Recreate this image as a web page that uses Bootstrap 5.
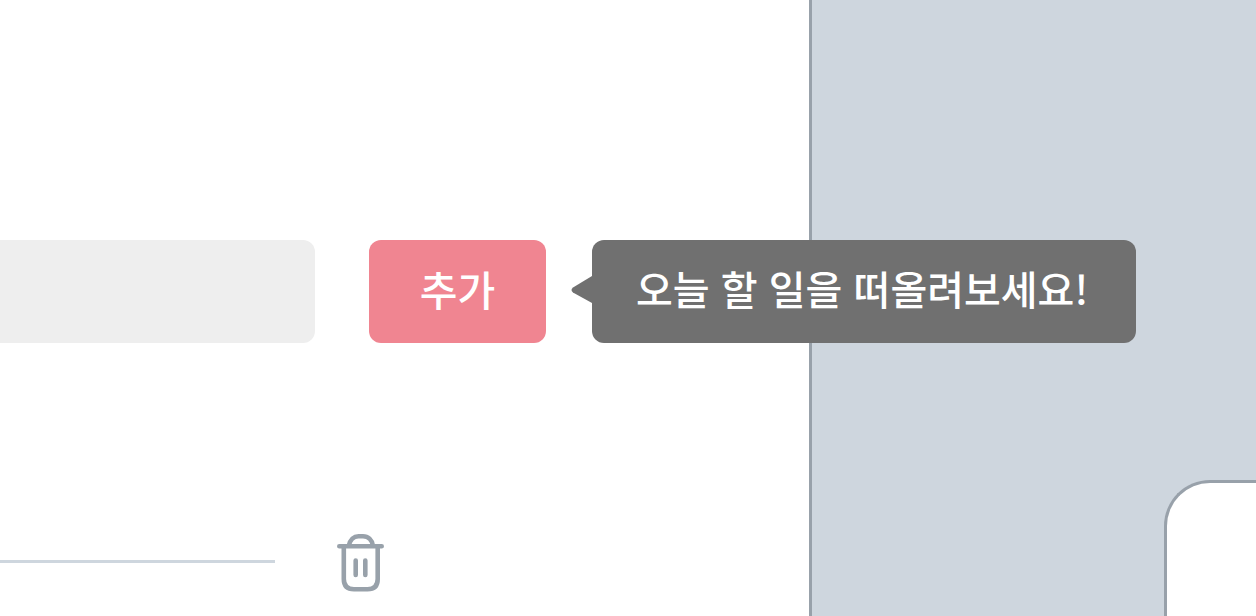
<!DOCTYPE html>
<html lang="ko">
<head>
<meta charset="utf-8">
<meta name="viewport" content="width=device-width, initial-scale=1">
<title>할 일</title>
<link href="https://cdn.jsdelivr.net/npm/bootstrap@5.3.0/dist/css/bootstrap.min.css" rel="stylesheet">
<style>
  body { font-family: "Noto Sans CJK KR", sans-serif; background: #fff; overflow-x: hidden; }
  .todo-main { border-right: 3px solid #98a1aa; padding-top: 240px; min-width: 0; }
  .todo-form { gap: 54px; padding-right: 263px; height: 103px; }
  .todo-input, .todo-input:focus { background: #eee; border: 0; border-radius: 0 12px 12px 0; box-shadow: none; font-size: 41px; }
  .todo-add, .todo-add:hover { width: 177px; padding: 0 0 8px; background: #f08591; color: #fff; border: 0; border-radius: 12px; font-size: 41px; font-weight: 500; line-height: 60px; }
  .todo-hint { left: 100%; margin-left: 46px; padding: 0 48px 8px 44px; background: #707070; color: #fff; border-radius: 12px; font-size: 40px; font-weight: 500; line-height: 60px; z-index: 2; }
  .todo-arrow { right: 100%; width: 21px; height: 32px; }
  .todo-item { margin-top: 191px; gap: 62px; padding-right: 424px; }
  .todo-rule { height: 3px; margin-bottom: 4px; background: #ced6de; }
  .todo-trash { width: 48px; height: 58px; }
  .todo-side { width: 444px; background: #ced6de; padding: 480px 0 0 352px; }
  .todo-panel { background: #fff; border: 3px solid #98a1aa; border-width: 3px 0 0 3px; border-radius: 46px 0 0 0; }
</style>
</head>
<body>
<div class="d-flex min-vh-100">
  <main class="todo-main flex-grow-1">
    <form class="todo-form d-flex">
      <input type="text" class="todo-input form-control flex-grow-1" aria-label="할 일">
      <div class="position-relative d-flex flex-shrink-0">
        <button type="button" class="todo-add btn" aria-describedby="hint">추가</button>
        <div id="hint" role="tooltip" class="todo-hint position-absolute top-0 h-100 d-flex align-items-center text-nowrap">
          <svg class="todo-arrow position-absolute" viewBox="0 0 21 32" aria-hidden="true"><path d="M21 4 2 15.500Q-1 18 2 20.500L21 31Z" fill="#707070"/></svg>
          오늘 할 일을 떠올려보세요!
        </div>
      </div>
    </form>
    <div class="todo-item d-flex align-items-center">
      <div class="todo-rule flex-grow-1"></div>
      <button type="button" class="todo-trash btn p-0 border-0 d-flex flex-shrink-0" aria-label="삭제">
        <svg width="48" height="58" viewBox="0 0 48 58" fill="none" stroke="#98a1aa" stroke-width="4.600" stroke-linecap="round" aria-hidden="true">
          <path d="M2.300 12.300H44.700M11.800 12C13 5.500 17 2.300 21.500 2.300H26C31 2.300 35 5.500 36 12M6.800 12.500V45Q6.800 55.200 17 55.200H30.500Q40.700 55.200 40.700 45V12.500M18.700 26.500V41M28.300 26.500V41"/>
        </svg>
      </button>
    </div>
  </main>
  <aside class="todo-side d-flex flex-shrink-0">
    <section class="todo-panel flex-grow-1" aria-label="목록"></section>
  </aside>
</div>
<script src="https://cdn.jsdelivr.net/npm/bootstrap@5.3.0/dist/js/bootstrap.bundle.min.js"></script>
</body>
</html>
